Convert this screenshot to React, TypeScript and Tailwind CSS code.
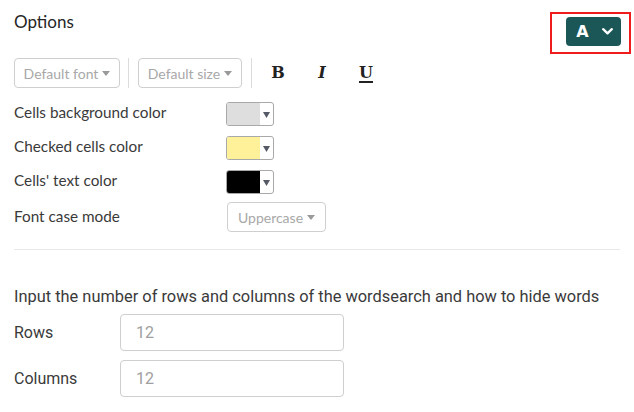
import React from "react";

const Caret = ({ className = "" }: { className?: string }) => (
  <svg width="8" height="5" viewBox="0 0 8 5" className={className}>
    <path d="M0 0 L8 0 L4 5 Z" fill="currentColor" />
  </svg>
);

const SelectBox = ({ label, w }: { label: string; w: string }) => (
  <div
    className={`${w} h-[30px] flex items-center justify-center gap-[4px] border border-[#cfcfcf] rounded-[4px] text-[14px] text-[#a8a8a8]`}
    style={{ fontFamily: "Lato, 'Noto Sans', sans-serif" }}
  >
    <span>{label}</span>
    <Caret className="text-[#9a9a9a]" />
  </div>
);

const Swatch = ({ color }: { color: string }) => (
  <div className="w-[48px] h-[24px] flex border border-[#a9a9a9] rounded-[3px] overflow-hidden bg-white">
    <div className="w-[33px] h-full" style={{ background: color }} />
    <div className="flex-1 flex items-center justify-center pt-[2px]">
      <svg width="7" height="6" viewBox="0 0 7 6">
        <path d="M0 0 L7 0 L3.5 6 Z" fill="#555a66" />
      </svg>
    </div>
  </div>
);

export default function App() {
  const lato = { fontFamily: "Lato, 'Noto Sans', sans-serif" };
  const roboto = { fontFamily: "Roboto, 'Liberation Sans', sans-serif" };
  return (
    <div className="w-[634px] h-[412px] bg-white overflow-hidden pl-[14px] pr-[13px] pt-[10px]" style={lato}>
      <div className="flex justify-between items-start h-[48px]">
        <div className="text-[17px] leading-[24px] text-[#262626] font-normal">Options</div>
        <div className="relative mt-[7px]">
          <div className="absolute left-[-16px] right-[-10px] top-[-5px] bottom-[-8px] border-2 border-[#ee1c1c] pointer-events-none" />
          <button className="w-[55px] h-[29px] bg-[#1c5757] rounded-[4px] flex items-center justify-center gap-[13px] pl-[2px]">
            <span
              className="text-white text-[16px] font-bold leading-none"
              style={{ fontFamily: "'DejaVu Sans', sans-serif" }}
            >
              A
            </span>
            <svg width="11" height="7" viewBox="0 0 11 7">
              <path d="M1.2 1.2 L5.5 5.3 L9.8 1.2" stroke="white" strokeWidth="2.3" fill="none" strokeLinecap="round" strokeLinejoin="round" />
            </svg>
          </button>
        </div>
      </div>

      <div className="flex items-center h-[30px]">
        <SelectBox label="Default font" w="w-[106px]" />
        <div className="w-px h-[30px] bg-[#dcdcdc] ml-[8px] mr-[9px]" />
        <SelectBox label="Default size" w="w-[104px]" />
        <div className="w-px h-[30px] bg-[#dcdcdc] ml-[9px] mr-[4px]" />
        <div className="flex items-center text-[#222]" style={{ fontFamily: "'DejaVu Serif', serif" }}>
          <div className="w-[44px] flex justify-center text-[16px] font-bold">B</div>
          <div className="w-[44px] flex justify-center text-[16px] font-bold italic">I</div>
          <div className="w-[44px] flex justify-center text-[16px] font-bold underline decoration-2 underline-offset-[3px]">U</div>
        </div>
      </div>

      <div className="flex flex-col gap-[10px] mt-[14px] text-[15.3px] text-[#3a3a3a]">
        <div className="flex items-center h-[24px]">
          <div className="w-[212px] pb-[3px]">Cells background color</div>
          <Swatch color="#dedede" />
        </div>
        <div className="flex items-center h-[24px]">
          <div className="w-[212px] pb-[3px]">Checked cells color</div>
          <Swatch color="#fff19a" />
        </div>
        <div className="flex items-center h-[24px]">
          <div className="w-[212px] pb-[3px]">Cells' text color</div>
          <Swatch color="#000000" />
        </div>
      </div>
      <div className="flex items-center h-[30px] mt-[8px] text-[15.3px] text-[#3a3a3a]">
        <div className="w-[213px] pb-[1px]">Font case mode</div>
        <SelectBox label="Uppercase" w="w-[99px]" />
      </div>

      <div className="h-px bg-[#e8e8e8] mt-[17px] mr-[1px]" />

      <div style={roboto}>
        <p className="mt-[35px] text-[16.4px] leading-[24px] text-[#3a3a3a]">
          Input the number of rows and columns of the wordsearch and how to hide words
        </p>
        <div className="flex flex-col gap-[9px] mt-[5px]">
          <div className="flex items-center">
            <div className="w-[106px] text-[16px] text-[#3a3a3a]">Rows</div>
            <div className="w-[224px] h-[37px] border border-[#cfcfcf] rounded-[4px] flex items-center pl-[15px] text-[16px] text-[#a0a0a0]">
              12
            </div>
          </div>
          <div className="flex items-center">
            <div className="w-[106px] text-[16px] text-[#3a3a3a]">Columns</div>
            <div className="w-[224px] h-[37px] border border-[#cfcfcf] rounded-[4px] flex items-center pl-[15px] text-[16px] text-[#a0a0a0]">
              12
            </div>
          </div>
        </div>
      </div>
    </div>
  );
}
